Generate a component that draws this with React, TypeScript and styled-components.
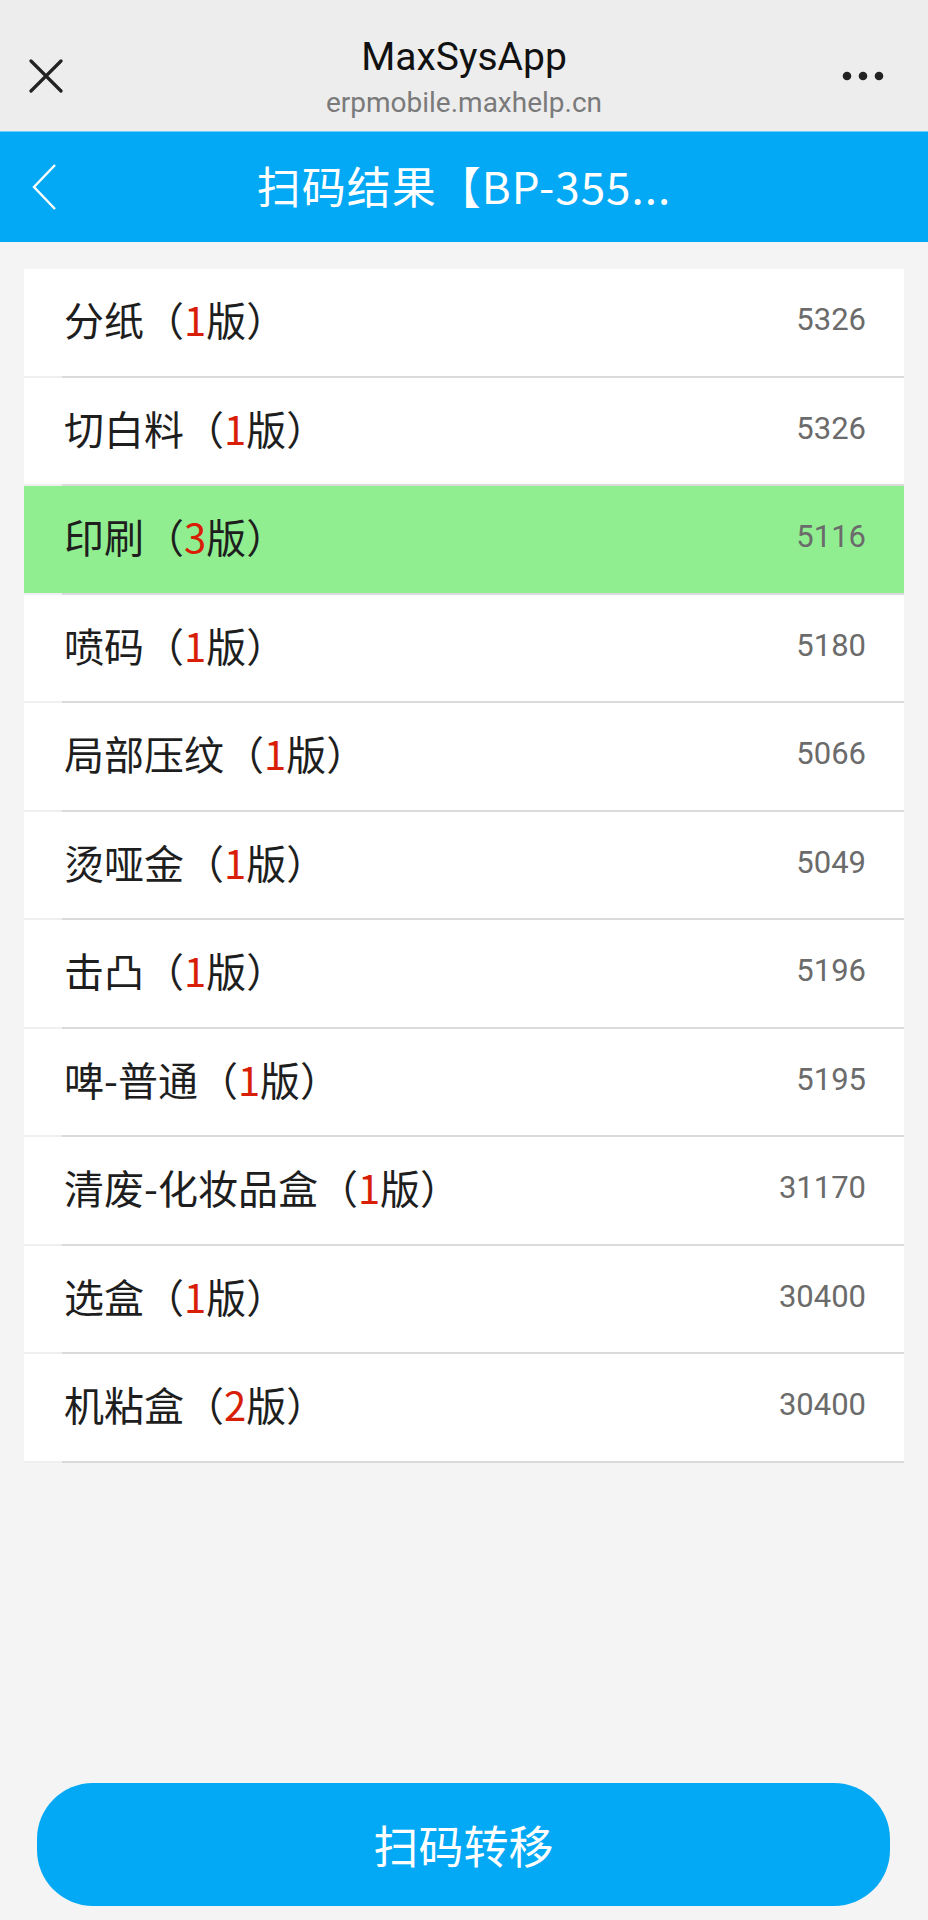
import * as React from 'react';
import styled, { createGlobalStyle } from 'styled-components';

const GlobalStyle = createGlobalStyle`
  html, body {
    margin: 0;
    padding: 0;
    background: #f4f4f4;
    font-family: "Noto Sans CJK SC", "Noto Sans", Roboto, sans-serif;
  }
`;

const steps = [
  { name: '分纸', plates: 1, qty: 5326 },
  { name: '切白料', plates: 1, qty: 5326 },
  { name: '印刷', plates: 3, qty: 5116, active: true },
  { name: '喷码', plates: 1, qty: 5180 },
  { name: '局部压纹', plates: 1, qty: 5066 },
  { name: '烫哑金', plates: 1, qty: 5049 },
  { name: '击凸', plates: 1, qty: 5196 },
  { name: '啤-普通', plates: 1, qty: 5195 },
  { name: '清废-化妆品盒', plates: 1, qty: 31170 },
  { name: '选盒', plates: 1, qty: 30400 },
  { name: '机粘盒', plates: 2, qty: 30400 },
];

export default function App() {
  return (
    <>
      <GlobalStyle />
      <Page>
        <BrowserBar>
          <IconButton aria-label="close" $align="start">
            <svg width="34" height="34" viewBox="0 0 34 34">
              <path d="M2 2 L32 32 M32 2 L2 32" stroke="#222" strokeWidth="3.2" strokeLinecap="round" />
            </svg>
          </IconButton>
          <BrowserTitle>
            <AppName>MaxSysApp</AppName>
            <Domain>erpmobile.maxhelp.cn</Domain>
          </BrowserTitle>
          <IconButton aria-label="more" $align="end">
            <svg width="42" height="10" viewBox="0 0 42 10">
              <circle cx="5" cy="5" r="4.3" fill="#222" />
              <circle cx="21" cy="5" r="4.3" fill="#222" />
              <circle cx="37" cy="5" r="4.3" fill="#222" />
            </svg>
          </IconButton>
        </BrowserBar>

        <NavBar>
          <BackButton aria-label="back">
            <svg width="28" height="48" viewBox="0 0 28 48">
              <path d="M25 2 L4 24 L25 46" fill="none" stroke="#fff" strokeWidth="2.4" strokeLinejoin="miter" />
            </svg>
          </BackButton>
          <NavTitle>扫码结果【BP-355...</NavTitle>
          <NavSpacer />
        </NavBar>

        <List>
          {steps.map((s) => (
            <Row key={s.name} $active={!!s.active}>
              <Label>
                {s.name}（<Count>{s.plates}</Count>版）
              </Label>
              <Qty>{s.qty}</Qty>
            </Row>
          ))}
        </List>

        <Footer>
          <ActionButton>扫码转移</ActionButton>
        </Footer>
      </Page>
    </>
  );
}

const Page = styled.div`
  min-height: 100vh;
  display: flex;
  flex-direction: column;
  background: #f4f4f4;
`;

const BrowserBar = styled.header`
  height: 131px;
  background: #ededed;
  display: flex;
  align-items: center;
  justify-content: space-between;
  padding: 0 44px 0 29px;
  box-sizing: border-box;
`;

const IconButton = styled.div<{ $align: 'start' | 'end' }>`
  width: 60px;
  display: flex;
  align-items: center;
  justify-content: ${(p) => (p.$align === 'start' ? 'flex-start' : 'flex-end')};
  margin-left: ${(p) => (p.$align === 'start' ? '0' : '-15px')};
  margin-right: ${(p) => (p.$align === 'start' ? '-15px' : '0')};
  padding-left: ${(p) => (p.$align === 'start' ? '0' : '15px')};
  padding-right: ${(p) => (p.$align === 'start' ? '15px' : '0')};
  margin-top: 20px;
  box-sizing: border-box;
`;

const BrowserTitle = styled.div`
  flex: 1;
  display: flex;
  flex-direction: column;
  align-items: center;
  padding-top: 22px;
  margin-left: 15px;
`;

const AppName = styled.div`
  font-family: Roboto, "Noto Sans", sans-serif;
  font-size: 39px;
  line-height: 46px;
  color: #111;
`;

const Domain = styled.div`
  font-family: Roboto, "Noto Sans", sans-serif;
  font-size: 28px;
  line-height: 34px;
  color: #7a7a7a;
  margin-top: 6px;
`;

const NavBar = styled.div`
  height: 111px;
  background: #03a9f4;
  border-top: 1px solid #6fd0f7;
  box-sizing: border-box;
  display: flex;
  align-items: center;
  padding: 0 30px;
`;

const BackButton = styled.div`
  width: 70px;
  display: flex;
  align-items: center;
`;

const NavTitle = styled.div`
  flex: 1;
  text-align: center;
  color: #fff;
  font-size: 44px;
  line-height: 50px;
  letter-spacing: 1px;
  white-space: nowrap;
  margin-top: -4px;
`;

const NavSpacer = styled.div`
  width: 70px;
`;

const List = styled.div`
  margin: 27px 24px 0;
  background: #fff;
`;

const Row = styled.div<{ $active: boolean }>`
  height: 108.5px;
  box-sizing: border-box;
  display: flex;
  align-items: center;
  justify-content: space-between;
  padding: 0 38px 0 40px;
  background: ${(p) => (p.$active ? '#90ee90' : '#fff')};
  border-bottom: 2px solid #efefef;
  position: relative;

  &::after {
    content: '';
    position: absolute;
    left: 38px;
    right: 0;
    bottom: -2px;
    height: 2px;
    background: #dadada;
  }
`;

const Label = styled.div`
  font-size: 40px;
  color: #1e1e1e;
  white-space: nowrap;
  margin-top: -6px;
`;

const Count = styled.span`
  color: #d81e06;
`;

const Qty = styled.div`
  font-family: Roboto, "Noto Sans", sans-serif;
  font-size: 31px;
  color: #6b6b6b;
  margin-top: -5px;
`;

const Footer = styled.div`
  margin-top: auto;
  padding: 0 38px 14px 37px;
`;

const ActionButton = styled.button`
  width: 100%;
  height: 123px;
  border: none;
  border-radius: 56px;
  background: #03a9f4;
  color: #fff;
  font-family: "Noto Sans CJK SC", sans-serif;
  font-size: 45px;
  cursor: pointer;
`;
